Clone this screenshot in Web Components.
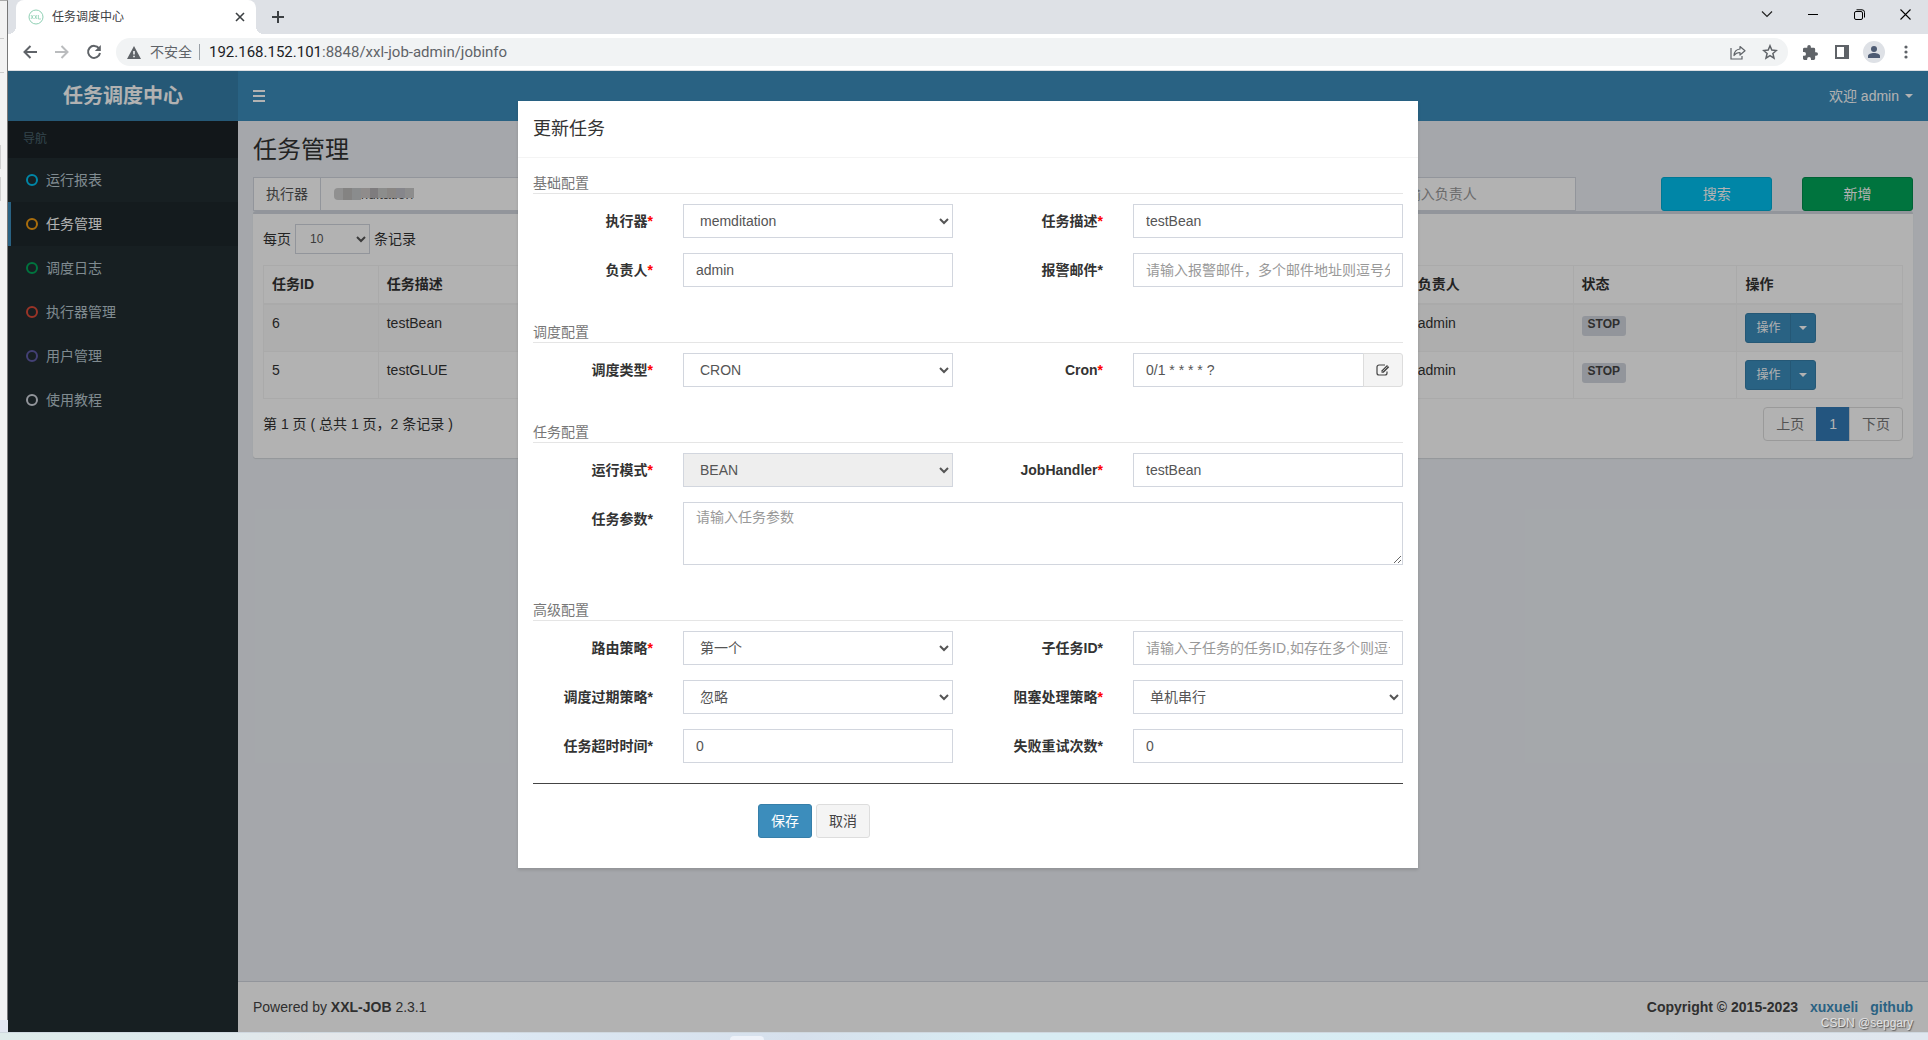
<!DOCTYPE html>
<html lang="zh-CN">
<head>
<meta charset="utf-8">
<title>任务调度中心</title>
<style>
html, body { margin: 0; height: 100%; }
body { font: 14px/20px "Liberation Sans", "Noto Sans CJK SC", sans-serif; color: #333; overflow: hidden; }
</style>
</head>
<body>
<desk-top>
  <browser-window>
    <tab-strip slot="chrome"></tab-strip>
    <tool-bar slot="chrome"></tool-bar>
    <admin-app>
      <app-header slot="header"></app-header>
      <side-nav slot="nav">
        <nav-item color="#00c0ef">运行报表</nav-item>
        <nav-item color="#f39c12" active>任务管理</nav-item>
        <nav-item color="#00a65a">调度日志</nav-item>
        <nav-item color="#dd4b39">执行器管理</nav-item>
        <nav-item color="#605ca8">用户管理</nav-item>
        <nav-item color="#d2d6de">使用教程</nav-item>
      </side-nav>
      <job-page></job-page>
      <app-footer slot="footer"></app-footer>
      <edit-dialog slot="dialog" heading="更新任务">
        <form-section heading="基础配置">
          <form-field label="执行器" required type="select" value="memditation"></form-field>
          <form-field label="任务描述" required value="testBean"></form-field>
          <form-field label="负责人" required value="admin"></form-field>
          <form-field label="报警邮件" placeholder="请输入报警邮件，多个邮件地址则逗号分隔"></form-field>
        </form-section>
        <form-section heading="调度配置">
          <form-field label="调度类型" required type="select" value="CRON"></form-field>
          <form-field label="Cron" required value="0/1 * * * * ?" addon></form-field>
        </form-section>
        <form-section heading="任务配置">
          <form-field label="运行模式" required type="select" value="BEAN" disabled></form-field>
          <form-field label="JobHandler" required value="testBean"></form-field>
          <form-field label="任务参数" type="textarea" placeholder="请输入任务参数" wide></form-field>
        </form-section>
        <form-section heading="高级配置">
          <form-field label="路由策略" required type="select" value="第一个"></form-field>
          <form-field label="子任务ID" placeholder="请输入子任务的任务ID,如存在多个则逗号分隔"></form-field>
          <form-field label="调度过期策略" type="select" value="忽略"></form-field>
          <form-field label="阻塞处理策略" required type="select" value="单机串行"></form-field>
          <form-field label="任务超时时间" value="0"></form-field>
          <form-field label="失败重试次数" value="0"></form-field>
        </form-section>
      </edit-dialog>
    </admin-app>
  </browser-window>
</desk-top>

<script>
const BASE = `
  :host, * { box-sizing: border-box; }
  button, input, select, textarea { font: inherit; color: inherit; margin: 0; }
  a { text-decoration: none; color: inherit; }
  svg { display: block; }
`;
function define(name, css, html) {
  customElements.define(name, class extends HTMLElement {
    connectedCallback() {
      if (this.shadowRoot) return;
      const root = this.attachShadow({ mode: 'open' });
      const body = typeof html === 'function' ? html(this) : html;
      root.innerHTML = `<style>${BASE}${css}</style>${body}`;
    }
  });
}

/* Desktop: sliver of another window at the left, taskbar at the bottom */
define('desk-top', `
  :host { display: grid; grid-template: minmax(0, 1fr) 8px / 8px minmax(0, 1fr); height: 100vh; }
  .behind { display: flex; flex-direction: column; background: #f2f2f2; border-right: 1px solid #777; border-top: 1px solid #aaa; margin-bottom: 12px; box-shadow: 0 12px #e3e8f2; }
  .behind i { flex: none; width: 4px; border-bottom: 1px solid #ccc; }
  .behind i:nth-child(1) { height: 38px; }
  .behind i:nth-child(2) { height: 34px; }
  .behind b { flex: none; width: 1px; height: 24px; background: #d0d0d0; margin-top: 8px; }
  .behind i + b { margin-top: 72px; }
  .task { grid-column: 1 / 3; display: flex; align-items: flex-end; gap: 1px; padding-left: 730px; border-top: 1px solid #cfd8e0;
    background: linear-gradient(90deg, #dfeceb 0, #dce9ec 180px, #e4e7ea 330px, #dce8f3 500px, #d6e0ec 800px, #d8ecf3 1000px, #d8edf4 1560px, #e0e7ee 1720px, #dfe6ee 100%); }
  .task i { width: 34px; height: 4px; border-radius: 4px 4px 0 0; background: #eef2f9; }
`, `<div class="behind"><i></i><i></i><b></b><b></b></div><slot></slot><div class="task"><i></i></div>`);

define('browser-window', `
  :host { display: flex; flex-direction: column; min-width: 0; min-height: 0; }
  ::slotted(admin-app) { flex: 1; }
`, `<slot name="chrome"></slot><slot></slot>`);

define('tab-strip', `
  :host { display: flex; height: 34px; background: #dee1e6; padding-left: 8px; }
  .tab { position: relative; display: flex; align-items: center; width: 240px; padding: 0 10px 0 12px; gap: 8px; background: #fff; border-radius: 8px 8px 0 0; font-size: 12px; color: #3c4043; }
  .tab::before, .tab::after { content: ""; position: absolute; bottom: 0; width: 8px; height: 8px; }
  .tab::before { left: -8px; background: radial-gradient(circle at 0 0, transparent 8px, #fff 8px); }
  .tab::after { right: -8px; background: radial-gradient(circle at 100% 0, transparent 8px, #fff 8px); }
  .tab span { flex: 1; }
  button { display: flex; align-items: center; justify-content: center; padding: 0; border: 0; background: none; height: 28px; }
  .close { width: 12px; }
  .add { width: 28px; height: 34px; margin-left: 8px; }
  .ctl { display: flex; margin-left: auto; }
  .ctl button { width: 46px; }
`, `<div class="tab">
    <svg width="16" height="16" viewBox="0 0 16 16" fill="none" stroke="#8fd0b4"><circle cx="8" cy="8" r="7"/><path d="M3 6l2.400 4M5.400 6L3 10M6.600 6L9 10M9 6l-2.400 4M10.400 6v4h2.600" stroke-width=".8"/></svg>
    <span>任务调度中心</span>
    <button class="close" aria-label="关闭标签页"><svg width="10" height="10" viewBox="0 0 10 10" stroke="#3c4043" stroke-width="1.600"><path d="M1 1l8 8M9 1L1 9"/></svg></button>
  </div>
  <button class="add" aria-label="新标签页"><svg width="12" height="12" viewBox="0 0 12 12" stroke="#3c4043" stroke-width="2"><path d="M6 0v12M0 6h12"/></svg></button>
  <div class="ctl">
    <button aria-label="搜索标签页"><svg width="12" height="8" viewBox="0 0 12 8" fill="none" stroke="#222" stroke-width="1.200"><path d="M1 1.500l5 5 5-5"/></svg></button>
    <button aria-label="最小化"><svg width="10" height="10" viewBox="0 0 10 10" stroke="#000"><path d="M0 5.500h10"/></svg></button>
    <button aria-label="还原"><svg width="11" height="11" viewBox="0 0 11 11" fill="none" stroke="#000"><rect x=".5" y="2.500" width="8" height="8" rx="1.500"/><path d="M2.500 .8h5.500a2.500 2.500 0 0 1 2.500 2.500V8.500"/></svg></button>
    <button aria-label="关闭"><svg width="11" height="11" viewBox="0 0 11 11" stroke="#000" stroke-width="1.100"><path d="M.5 .5l10 10M10.500 .5l-10 10"/></svg></button>
  </div>`);

define('tool-bar', `
  :host { display: flex; align-items: center; gap: 4px; height: 37px; padding: 0 8px; background: #fff; border-bottom: 1px solid #dcdfe3; }
  button { display: flex; align-items: center; justify-content: center; flex: none; width: 28px; height: 28px; padding: 0; border: 0; background: none; border-radius: 50%; }
  .omni { flex: 1; display: flex; align-items: center; gap: 4px; height: 28px; margin: 0 4px; padding: 0 4px 0 11px; border-radius: 14px; background: #f1f3f4; color: #5f6368; }
  .warn { margin: 0 5px 0 0; }
  .sep { width: 1px; height: 16px; background: #9aa0a6; margin: 0 5px 0 3px; }
  .url { flex: 1; font-family: Roboto, "Open Sans", sans-serif; font-size: 15px; }
  .url b { font-weight: 400; color: #202124; }
  .me i { display: grid; place-items: center; width: 22px; height: 22px; border-radius: 50%; background: #dee1e6; }
`, `
  <button aria-label="后退"><svg width="14" height="14" viewBox="0 0 14 14" fill="none" stroke="#5f6368" stroke-width="2"><path d="M14 7H2M7.500 1L1.500 7l6 6"/></svg></button>
  <button aria-label="前进"><svg width="14" height="14" viewBox="0 0 14 14" fill="none" stroke="#babcbe" stroke-width="2"><path d="M0 7h12M6.500 1l6 6-6 6"/></svg></button>
  <button aria-label="刷新"><svg width="16" height="16" viewBox="0 0 16 16"><path d="M13 4.400A6 6 0 1 0 14 9" fill="none" stroke="#5f6368" stroke-width="2"/><path d="M14.800 1v6h-6z" fill="#5f6368"/></svg></button>
  <div class="omni">
    <svg class="warn" width="14" height="13" viewBox="0 0 14 13"><path d="M7 0l7 13H0z" fill="#5f6368"/><path d="M6.200 5h1.600v3.500H6.200zM6.200 9.700h1.600v1.600H6.200z" fill="#f1f3f4"/></svg>
    <span>不安全</span><i class="sep"></i>
    <span class="url"><b>192.168.152.101</b>:8848/xxl-job-admin/jobinfo</span>
    <button aria-label="分享"><svg width="16" height="15" viewBox="0 0 16 15" fill="none" stroke="#5f6368" stroke-width="1.200"><path d="M1 3v11h11v-3"/><path d="M4 10.500c.3-4 2.600-6.200 6-6.500V1.500l5 4.300-5 4.200V7.500c-2.600 0-4.500.9-6 3z" stroke-linejoin="round"/></svg></button>
    <button aria-label="收藏"><svg width="16" height="16" viewBox="0 0 16 16" fill="none" stroke="#5f6368" stroke-width="1.500"><path d="M8 1.800l1.800 4.300 4.600.4-3.500 3 1.100 4.600L8 11.700l-4 2.400 1.100-4.600-3.500-3 4.600-.4z"/></svg></button>
  </div>
  <button aria-label="扩展程序"><svg width="15" height="15" viewBox="2 1 21 21" fill="#5f6368"><path d="M20.500 11H19V7a2 2 0 0 0-2-2h-4V3.500a2.500 2.500 0 0 0-5 0V5H4a2 2 0 0 0-2 2v3.800h1.500a2.700 2.700 0 0 1 0 5.400H2V20a2 2 0 0 0 2 2h3.800v-1.500a2.700 2.700 0 0 1 5.400 0V22H17a2 2 0 0 0 2-2v-4h1.500a2.500 2.500 0 0 0 0-5z"/></svg></button>
  <button aria-label="侧边栏"><svg width="14" height="14" viewBox="0 0 14 14"><path d="M0 0h14v14H0zM2 2v10h7V2z" fill="#5f6368" fill-rule="evenodd"/></svg></button>
  <button class="me" aria-label="用户"><i><svg width="12" height="12" viewBox="0 0 12 12" fill="#4d5b73"><circle cx="6" cy="3" r="3"/><path d="M0 12V10c0-2 3-3 6-3s6 1 6 3v2z"/></svg></i></button>
  <button aria-label="菜单"><svg width="4" height="14" viewBox="0 0 4 14" fill="#5f6368"><circle cx="2" cy="2" r="1.600"/><circle cx="2" cy="7" r="1.600"/><circle cx="2" cy="12" r="1.600"/></svg></button>`);

/* Admin shell with the modal layer on top */
define('admin-app', `
  :host { position: relative; display: grid; grid-template: 50px minmax(0, 1fr) auto / 230px minmax(0, 1fr); min-height: 0; background: #ecf0f5; }
  ::slotted([slot=header]) { grid-column: 1 / 3; }
  ::slotted([slot=nav]) { grid-row: 2 / 4; }
  .shade { position: absolute; inset: 0; padding: 30px 0; background: rgba(0, 0, 0, .3); overflow: hidden; }
  .mark { position: absolute; right: 15px; bottom: 0; font-size: 12px; line-height: 18px; color: #e2e2e2; text-shadow: 1px 1px 1px #555; }
`, `<slot name="header"></slot><slot name="nav"></slot><slot></slot><slot name="footer"></slot>
  <div class="shade"><slot name="dialog"></slot></div><span class="mark">CSDN @sepgary</span>`);

define('app-header', `
  :host { display: flex; align-items: center; height: 50px; background: #3c8dbc; color: #fff; }
  .logo { width: 230px; line-height: 50px; text-align: center; background: #367fa9; font-size: 20px; font-weight: 700; }
  .bars { display: grid; gap: 3px; width: 42px; padding: 0 15px; border: 0; background: none; }
  .bars i { width: 12px; height: 2px; background: #fff; }
  .user { display: flex; align-items: center; gap: 6px; margin-left: auto; padding: 0 15px; }
  .user i { border: 4px solid transparent; border-top-color: #fff; border-bottom: 0; }
`, `<a class="logo" href="#">任务调度中心</a>
  <button class="bars" aria-label="切换导航"><i></i><i></i><i></i></button>
  <a class="user" href="#">欢迎 admin<i></i></a>`);

define('side-nav', `
  :host { display: block; background: #222d32; }
  header { padding: 10px 15px; font-size: 12px; line-height: 17px; background: #1a2226; color: #4b646f; }
`, `<header>导航</header><nav><slot></slot></nav>`);

define('nav-item', `
  :host { display: block; color: #b8c7ce; }
  :host([active]) { background: #1e282c; color: #fff; }
  a { display: flex; align-items: center; gap: 8px; height: 44px; padding-left: 15px; border-left: 3px solid transparent; }
  :host([active]) a { border-left-color: #3c8dbc; }
  i { width: 12px; height: 12px; border: 2px solid var(--ring); border-radius: 50%; }
`, el => `<a href="#" style="--ring:${el.getAttribute('color')}"><i></i><slot></slot></a>`);

define('job-page', `
  :host { display: block; padding: 15px; min-width: 0; min-height: 0; overflow: hidden; }
  h1 { margin: 0 0 13px; font-size: 24px; font-weight: 400; line-height: 28px; }
  .filters { display: grid; grid-template-columns: repeat(12, minmax(0, 1fr)); margin: 0 -15px; }
  .filters > * { margin: 0 15px; }
  .group { grid-column: 1 / 4; display: flex; height: 34px; }
  .group label { padding: 6px 12px; border: 1px solid #d2d6de; border-right: 0; background: #fff; color: #555; }
  .pick { flex: 1; position: relative; }
  select, input { border: 1px solid #d2d6de; border-radius: 0; background: #fff; color: #555; }
  .pick select { width: 100%; height: 34px; padding: 6px 12px; }
  .mosaic { position: absolute; left: 14px; top: 11px; display: flex; align-items: flex-start; width: 80px; border-radius: 4px 0 0 4px; overflow: hidden; }
  .mosaic i { flex: 1; height: 10px; }
  .mosaic i:nth-child(-n+3) { height: 12px; }
  .owner { grid-column: 9 / 11; width: 196px; height: 34px; padding: 6px 12px; }
  .owner::placeholder { color: #999; opacity: 1; }
  .act { height: 34px; border: 1px solid; border-radius: 3px; color: #fff; }
  .find { background: #00c0ef; border-color: #00acd6; }
  .new { background: #00a65a; border-color: #008d4c; }
  .box { padding: 10px 10px 17px; border-top: 3px solid #d2d6de; border-radius: 3px; background: #fff; box-shadow: 0 1px 1px rgba(0, 0, 0, .1); }
  .len { display: flex; align-items: center; gap: 4px; height: 30px; margin-bottom: 11px; }
  .len select { width: 75px; height: 30px; padding: 5px 10px; font-size: 12px; }
  table { width: 100%; table-layout: fixed; border-collapse: separate; border-spacing: 0; border: 1px solid #f4f4f4; border-right: 0; border-bottom: 0; }
  th, td { padding: 8px; text-align: left; vertical-align: top; border: 0 solid #f4f4f4; border-right-width: 1px; border-bottom-width: 1px; }
  th { border-bottom-width: 2px; padding-bottom: 9px; }
  tbody tr:first-child { background: #f9f9f9; }
  .stop { display: inline-block; margin-top: 3px; padding: 0 6px 3px; font-size: 12px; font-weight: 700; line-height: 17px; border-radius: 3px; background: #d2d6de; color: #444; vertical-align: top; }
  .split { display: flex; }
  .split button { height: 30px; padding: 0 10px; font-size: 12px; border: 1px solid #367fa9; border-radius: 3px 0 0 3px; background: #3c8dbc; color: #fff; }
  .split button + button { width: 26px; padding: 0 8px; margin-left: -1px; border-radius: 0 3px 3px 0; }
  .split i { display: block; border: 4px solid transparent; border-top-color: #fff; border-bottom: 0; }
  .foot { display: flex; justify-content: space-between; align-items: center; margin-top: 8px; }
  .pages { display: flex; }
  .pages a { height: 34px; padding: 6px 12px; border: 1px solid #ddd; margin-left: -1px; background: #fff; color: #777; }
  .pages a:first-child { border-radius: 4px 0 0 4px; }
  .pages a:last-child { border-radius: 0 4px 4px 0; }
  .pages .on { background: #337ab7; border-color: #337ab7; color: #fff; }
`, `<h1>任务管理</h1>
  <div class="filters">
    <div class="group"><label for="g">执行器</label><div class="pick"><select id="g"><option>memditation</option></select>
      <div class="mosaic"><i style="background:#cfcfcf"></i><i style="background:#bdbcba"></i><i style="background:#c6c9cb"></i><i style="background:#cdc9c7"></i><i style="background:#b5b2b5"></i><i style="background:#c9cac9"></i><i style="background:#c5c1be"></i><i style="background:#c0c0c8"></i><i style="background:#cacaca"></i></div></div></div>
    <input class="owner" aria-label="负责人" placeholder="请输入负责人">
    <button class="act find">搜索</button><button class="act new">新增</button>
  </div>
  <div class="box">
    <div class="len"><label for="n">每页</label><select id="n"><option>10</option></select><span>条记录</span></div>
    <table>
      <colgroup><col style="width:7%"><col><col style="width:10%"><col style="width:10%"><col style="width:10.1%"></colgroup>
      <thead><tr><th>任务ID</th><th>任务描述</th><th>负责人</th><th>状态</th><th>操作</th></tr></thead>
      <tbody>${[['6', 'testBean'], ['5', 'testGLUE']].map(([id, d]) => `<tr><td>${id}</td><td>${d}</td><td>admin</td><td><span class="stop">STOP</span></td>
        <td><div class="split"><button>操作</button><button aria-label="更多"><i></i></button></div></td></tr>`).join('')}</tbody>
    </table>
    <div class="foot"><span>第 1 页 ( 总共 1 页，2 条记录 )</span><nav class="pages"><a href="#">上页</a><a class="on" href="#">1</a><a href="#">下页</a></nav></div>
  </div>`);

define('app-footer', `
  :host { display: flex; justify-content: space-between; padding: 15px; border-top: 1px solid #d2d6de; background: #fff; color: #444; }
  .r { display: flex; gap: 12px; font-weight: 700; }
  a { color: #3c8dbc; }
`, `<span>Powered by <b>XXL-JOB</b> 2.3.1</span>
  <div class="r"><span>Copyright © 2015-2023</span><a href="#">xuxueli</a><a href="#">github</a></div>`);

define('edit-dialog', `
  :host { display: block; width: 900px; max-width: 100%; margin: 0 auto; background: #fff; box-shadow: 0 2px 3px rgba(0, 0, 0, .125); }
  header { padding: 15px; border-bottom: 1px solid #f4f4f4; }
  h2 { margin: 0; font-size: 18px; font-weight: 400; line-height: 26px; color: #333; }
  form { padding: 15px; }
  .sections { display: grid; gap: 35px; }
  .acts { display: flex; gap: 4px; margin: 20px 0 0; padding: 20px 0 15px 225px; border-top: 1px solid #444; }
  .acts button { width: 54px; height: 34px; padding: 0; border: 1px solid #ddd; border-radius: 3px; background: #f4f4f4; color: #444; }
  .acts .save { border-color: #367fa9; background: #3c8dbc; color: #fff; }
`, el => `<header><h2>${el.getAttribute('heading')}</h2></header>
  <form><div class="sections"><slot></slot></div>
  <div class="acts"><button type="button" class="save">保存</button><button type="button">取消</button></div></form>`);

define('form-section', `
  :host { display: block; }
  h3 { margin: 0 0 10px; border-bottom: 1px solid #e5e5e5; font-size: 14px; font-weight: 400; line-height: 20px; color: #777; }
  .grid { display: grid; grid-template-columns: repeat(2, minmax(0, 1fr)); row-gap: 15px; margin: 0 -15px; }
  ::slotted([wide]) { grid-column: 1 / 3; }
`, el => `<h3>${el.getAttribute('heading')}</h3><div class="grid"><slot></slot></div>`);

define('form-field', `
  :host { display: flex; }
  label { flex: none; width: 150px; padding: 7px 15px 0; text-align: right; font-weight: 700; white-space: nowrap; }
  label i { font-style: normal; }
  :host([required]) label i { color: #f00; }
  .ctl { flex: 1; display: flex; min-width: 0; margin: 0 15px; }
  .ctl > :first-child { flex: 1; min-width: 0; height: 34px; padding: 6px 12px; border: 1px solid #d2d6de; border-radius: 0; background: #fff; color: #555; }
  .ctl > textarea:first-child { height: 63px; line-height: 16px; resize: vertical; display: block; }
  .ctl > select:disabled { background: #eee; opacity: 1; }
  ::placeholder { color: #999; opacity: 1; }
  .addon { display: grid; place-items: center; width: 40px; padding: 0; margin-left: -1px; border: 1px solid #ddd; border-radius: 0 3px 3px 0; background: #f4f4f4; }
`, el => {
  const get = n => el.getAttribute(n) || '';
  const off = el.hasAttribute('disabled') ? ' disabled' : '';
  const ctl = get('type') === 'select' ? `<select id="c"${off}><option>${get('value')}</option></select>`
    : get('type') === 'textarea' ? `<textarea id="c" placeholder="${get('placeholder')}"></textarea>`
    : `<input id="c" value="${get('value')}" placeholder="${get('placeholder')}">`;
  const addon = el.hasAttribute('addon') ? `<button type="button" class="addon" aria-label="编辑 Cron"><svg width="14" height="12" viewBox="0 0 14 12" fill="none" stroke="#444"><path d="M9 1H3a2 2 0 0 0-2 2v6a2 2 0 0 0 2 2h6a2 2 0 0 0 2-2V7.500" stroke-width="1.200"/><path d="M5.500 8.800V6.500L11 1l2.200 2.200-5.500 5.600z" fill="#444" stroke="none"/><path d="M6.600 7.500l5-5" stroke="#f4f4f4" stroke-width=".7"/></svg></button>` : '';
  return `<label for="c">${get('label')}<i>*</i></label><div class="ctl">${ctl}${addon}</div>`;
});
</script>
</body>
</html>
